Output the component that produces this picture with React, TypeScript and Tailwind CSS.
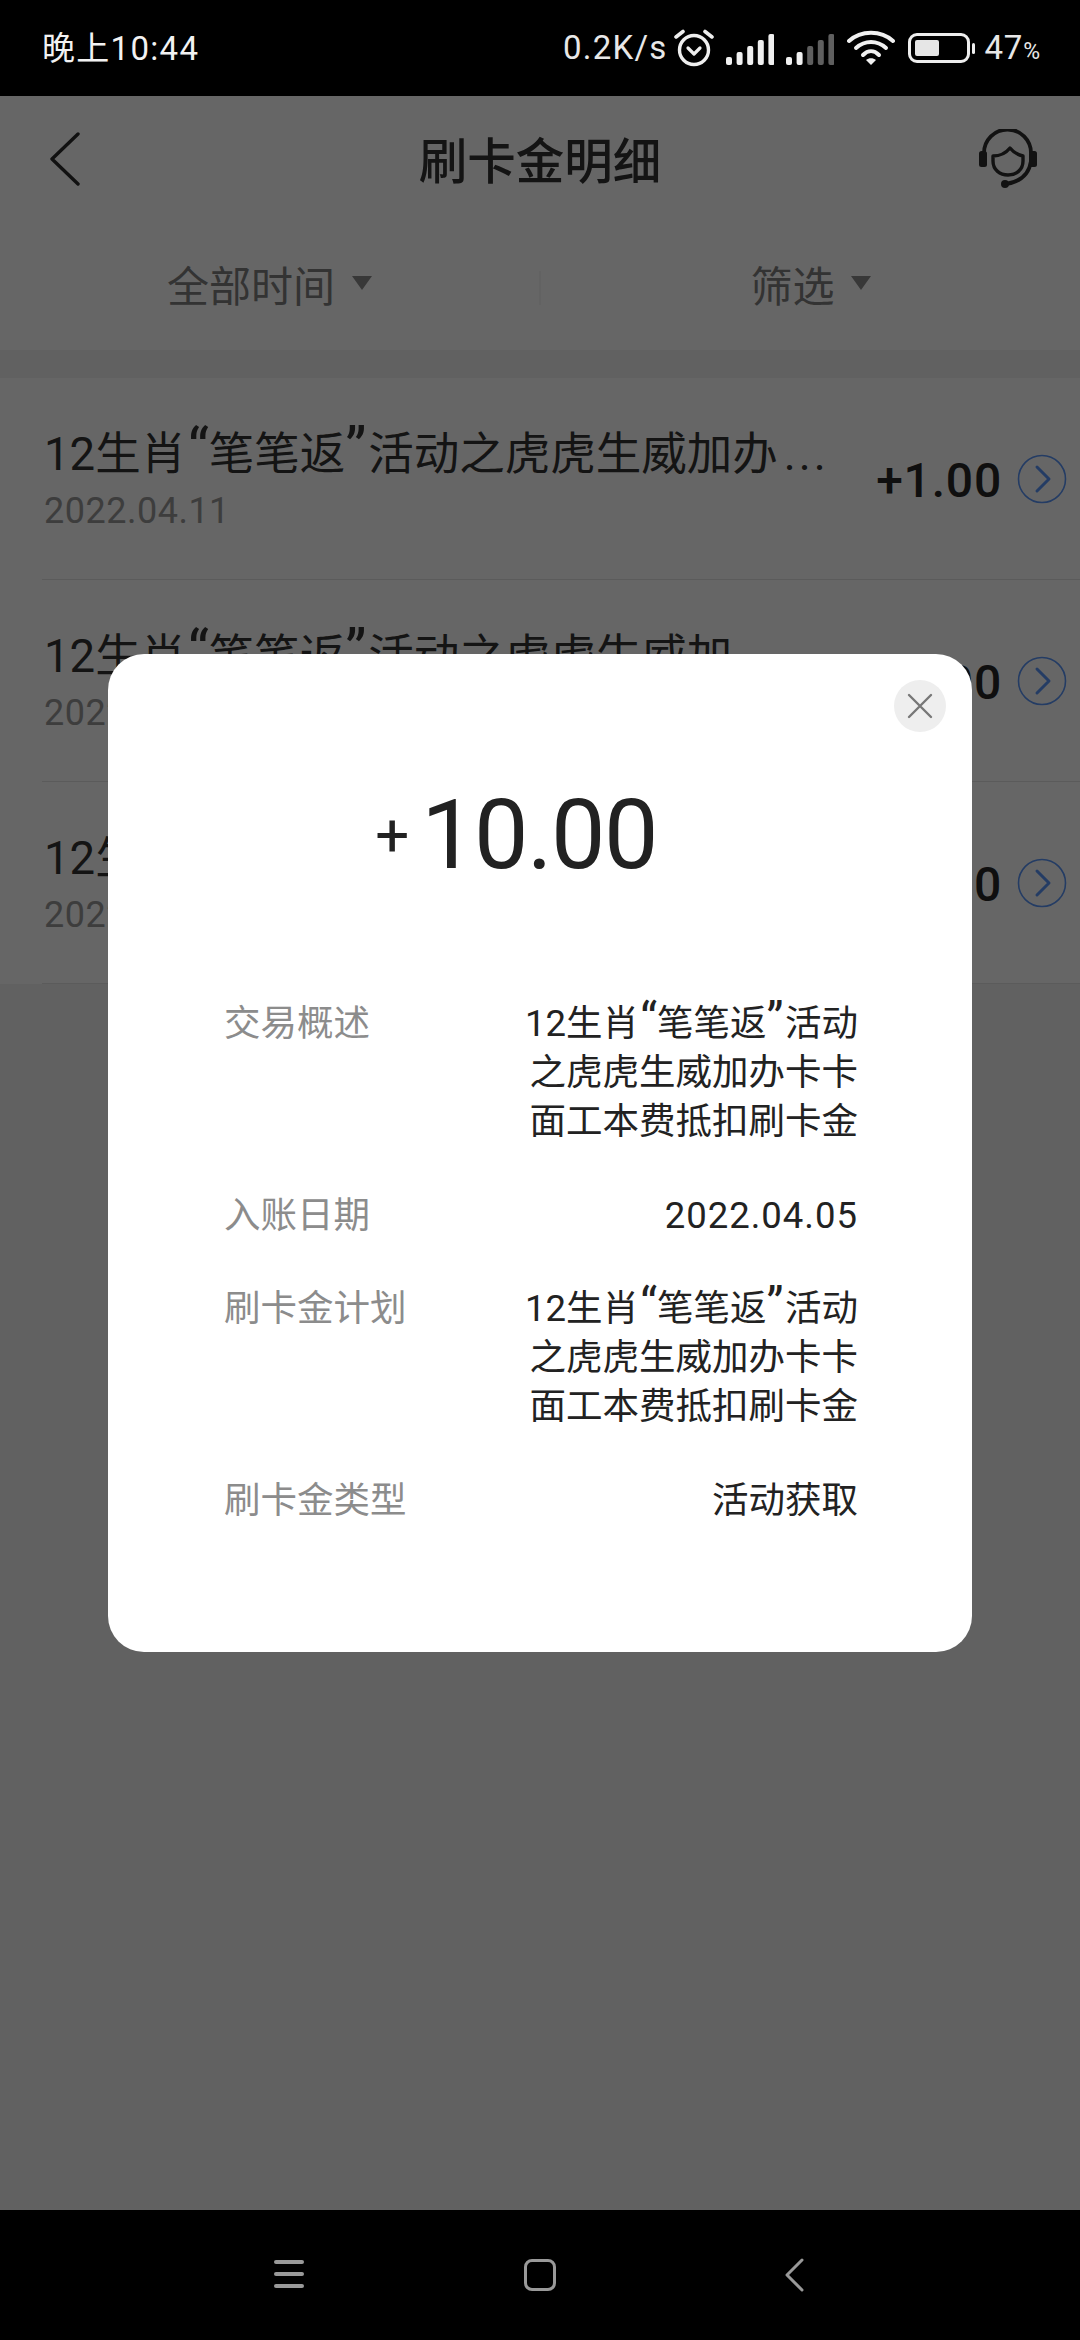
import React from "react";

function Bars({ dim }: { dim?: boolean }) {
  const hs = [8, 13, 19, 25, 31];
  return (
    <svg width="48" height="32" viewBox="0 0 48 32" className="shrink-0">
      {hs.map((h, i) => (
        <rect key={i} x={i * 10.6} y={32 - h} width="6" height={h} rx="2" fill={dim && i >= 2 ? "#5f5f5f" : "#f0f0f0"} />
      ))}
    </svg>
  );
}

function Chevron() {
  return (
    <svg width="50" height="50" viewBox="0 0 50 50" className="shrink-0" fill="none">
      <circle cx="25" cy="25" r="23.5" stroke="#5a96fa" strokeWidth="1.6" />
      <path d="M20 13 L32 25 L20 37" stroke="#5a96fa" strokeWidth="3" strokeLinecap="round" strokeLinejoin="round" />
    </svg>
  );
}

function Brand() {
  return (
    <>
      12生肖<span className="text-[1.3em] leading-[0] ml-[0.03em]">“</span>笔笔返<span className="text-[1.3em] leading-[0] mr-[0.03em]">”</span>活动
    </>
  );
}

function Row({ title, date, amount }: { title: React.ReactNode; date: string; amount: string }) {
  return (
    <div className="ml-[42px] h-[202px] flex items-center border-b border-[#e4e4e4] pl-[2px] pr-[13px]">
      <div className="w-[800px] min-w-0">
        <div className="whitespace-nowrap text-[45.5px] leading-[60px] mt-[1px] text-[#333333]">{title}</div>
        <div className="mt-[4px] text-[36px] leading-[44px] tracking-[0.5px] text-[#999999]">{date}</div>
      </div>
      <div className="ml-auto mt-[4px] text-[48px] leading-[60px] font-medium tracking-[0.8px] text-[#262626] whitespace-nowrap">{amount}</div>
      <div className="ml-[15px]">
        <Chevron />
      </div>
    </div>
  );
}

function Detail({ label, children }: { label: string; children: React.ReactNode }) {
  return (
    <div className="flex justify-between mb-[44.5px]">
      <div className="text-[36.5px] leading-[49px] text-[#8c8c8c] whitespace-nowrap">{label}</div>
      <div className="text-right text-[36.5px] leading-[49px] text-[#222222] whitespace-nowrap">{children}</div>
    </div>
  );
}

function Plan() {
  return (
    <>
      <div>
        <Brand />
      </div>
      <div>之虎虎生威加办卡卡</div>
      <div>面工本费抵扣刷卡金</div>
    </>
  );
}

export default function App() {
  return (
    <div className="w-[1080px] h-[2340px] flex flex-col bg-black overflow-hidden font-['Roboto','Noto_Sans_CJK_SC',sans-serif]">
      {/* status bar */}
      <div className="h-[96px] shrink-0 flex items-center pl-[42px] pr-[40px] text-white">
        <div className="text-[33px] leading-[40px] mt-[1px] tracking-[1.3px] text-[#f2f2f2]">晚上10:44</div>
        <div className="ml-auto flex items-center">
          <div className="text-[33px] leading-[40px] tracking-[1.2px] text-[#e8e8e8]">0.2K/s</div>
          <svg width="42" height="38" viewBox="0 0 42 38" fill="none" className="ml-[6px] mt-[-1px] shrink-0">
            <circle cx="21" cy="21" r="14.5" stroke="#eeeeee" strokeWidth="3.4" />
            <path d="M15 19 L21 25 L27 19" stroke="#eeeeee" strokeWidth="3.2" strokeLinecap="round" strokeLinejoin="round" />
            <path d="M3 8 L10 2.5 M39 8 L32 2.5" stroke="#eeeeee" strokeWidth="3.6" strokeLinecap="round" />
          </svg>
          <div className="ml-[11px] mt-[1px]"><Bars /></div>
          <div className="ml-[12px] mt-[1px]"><Bars dim /></div>
          <svg width="48" height="36" viewBox="0 0 48 36" fill="none" className="ml-[13px] shrink-0">
            <path d="M2 11 C14 0 34 0 46 11" stroke="#f0f0f0" strokeWidth="4" strokeLinecap="round" />
            <path d="M9 18 C18 10 30 10 39 18" stroke="#f0f0f0" strokeWidth="4" strokeLinecap="round" />
            <path d="M16 25 C21 20 27 20 32 25" stroke="#f0f0f0" strokeWidth="4" strokeLinecap="round" />
            <path d="M24 35 L19 30 C22 27.5 26 27.5 29 30 Z" fill="#f0f0f0" />
          </svg>
          <div className="ml-[13px] w-[62px] h-[30px] rounded-[9px] border-[3px] border-[#eeeeee] p-[4px] shrink-0">
            <div className="w-[24px] h-full bg-[#e6e6e6] rounded-[2px]" />
          </div>
          <div className="ml-[2px] w-[3px] h-[11px] rounded-full bg-[#eeeeee]" />
          <div className="ml-[9px] text-[33px] leading-[40px] tracking-[0.8px] text-[#e8e8e8]">47</div>
          <div className="text-[23px] leading-[24px] mt-[8px] text-[#e8e8e8]">%</div>
        </div>
      </div>

      {/* page */}
      <div className="relative flex-1 bg-[#f2f2f2] overflow-hidden">
        <div className="bg-white">
          <div className="relative h-[130px] flex items-center justify-center">
            <div className="absolute left-[49px] top-[36px]">
              <svg width="32" height="54" viewBox="0 0 32 54" fill="none">
                <path d="M29 2 L3 27 L29 52" stroke="#2b2b2b" strokeWidth="3.4" strokeLinecap="round" strokeLinejoin="round" />
              </svg>
            </div>
            <div className="text-[48.5px] leading-[60px] mt-[4px] font-medium text-[#333333]">刷卡金明细</div>
            <div className="absolute left-[978px] top-[33px]">
              <svg width="60" height="60" viewBox="0 0 60 60" fill="none">
                <path d="M6 24 A23.5 23.5 0 0 1 53 24" stroke="#2e2e2e" strokeWidth="3.8" />
                <path d="M53 32 C51 46 41 53 28 55" stroke="#2e2e2e" strokeWidth="3.8" />
                <rect x="1" y="22" width="8" height="16" rx="2.5" fill="#2e2e2e" />
                <rect x="51" y="22" width="8" height="16" rx="2.5" fill="#2e2e2e" />
                <circle cx="27" cy="55" r="4" fill="#2e2e2e" />
                <path d="M15 27 C22 27 28 24 32 19 C36 24 40 26 45 27 L45 32 C45 41 38 46 30 46 C22 46 15 41 15 32 Z" stroke="#2e2e2e" strokeWidth="3.4" strokeLinejoin="round" />
              </svg>
            </div>
          </div>
          <div className="h-[124px] flex items-center">
            <div className="flex-1 flex items-center justify-center">
              <span className="text-[42px] leading-[52px] text-[#808080]">全部时间</span>
              <span className="ml-[17px] mt-[-10px] w-0 h-0 border-x-[10px] border-x-transparent border-t-[14px] border-t-[#8c8c8c]" />
            </div>
            <div className="w-[2px] h-[34px] bg-[#f4f4f4]" />
            <div className="flex-1 flex items-center justify-center">
              <span className="text-[42px] leading-[52px] text-[#808080]">筛选</span>
              <span className="ml-[16px] mt-[-10px] w-0 h-0 border-x-[10px] border-x-transparent border-t-[14px] border-t-[#8c8c8c]" />
            </div>
          </div>
        </div>

        <div className="mt-[28px] bg-white">
          <Row
            title={
              <>
                <Brand />之虎虎生威加办<span className="ml-[6px] tracking-[3px]">...</span>
              </>
            }
            date="2022.04.11"
            amount="+1.00"
          />
          <Row title={<><Brand />之虎虎生威加</>} date="2022.04.08" amount="+1.00" />
          <Row title={<><Brand />之虎虎生威加</>} date="2022.04.05" amount="+10.00" />
        </div>

        {/* dim layer + dialog */}
        <div className="absolute inset-0 bg-black/60 flex justify-center items-start pt-[558px]">
          <div className="relative w-[864px] h-[998px] bg-white rounded-[36px] pl-[116px] pr-[114px]">
            <div className="absolute right-[26px] top-[26px] w-[52px] h-[52px] rounded-full bg-[#eeeeee] flex items-center justify-center">
              <svg width="26" height="26" viewBox="0 0 26 26" fill="none">
                <path d="M2 2 L24 24 M24 2 L2 24" stroke="#777777" strokeWidth="2.4" strokeLinecap="round" />
              </svg>
            </div>
            <div className="pt-[136px] h-[345px] flex justify-center items-start text-[#222222] pr-[50px]">
              <span className="text-[60px] leading-[60px] mt-[16px] mr-[12px]">+</span>
              <span className="text-[97px] leading-[90px] tracking-[-1.6px]">10.00</span>
            </div>
            <Detail label="交易概述"><Plan /></Detail>
            <Detail label="入账日期"><span className="tracking-[1px]">2022.04.05</span></Detail>
            <Detail label="刷卡金计划"><Plan /></Detail>
            <Detail label="刷卡金类型">活动获取</Detail>
          </div>
        </div>
      </div>

      {/* navigation bar */}
      <div className="relative h-[130px] shrink-0 bg-black">
        <div className="absolute left-[274px] top-[50px] w-[30px] flex flex-col gap-[8.5px]">
          <div className="h-[3.5px] rounded-full bg-[#999999]" />
          <div className="h-[3.5px] rounded-full bg-[#999999]" />
          <div className="h-[3.5px] rounded-full bg-[#999999]" />
        </div>
        <div className="absolute left-[524px] top-[49px] w-[32px] h-[32px] rounded-[8px] border-[3px] border-[#999999]" />
        <svg width="20" height="34" viewBox="0 0 20 34" fill="none" className="absolute left-[784px] top-[48px]">
          <path d="M18 2 L3 17 L18 32" stroke="#999999" strokeWidth="3" strokeLinecap="round" strokeLinejoin="round" />
        </svg>
      </div>
    </div>
  );
}
